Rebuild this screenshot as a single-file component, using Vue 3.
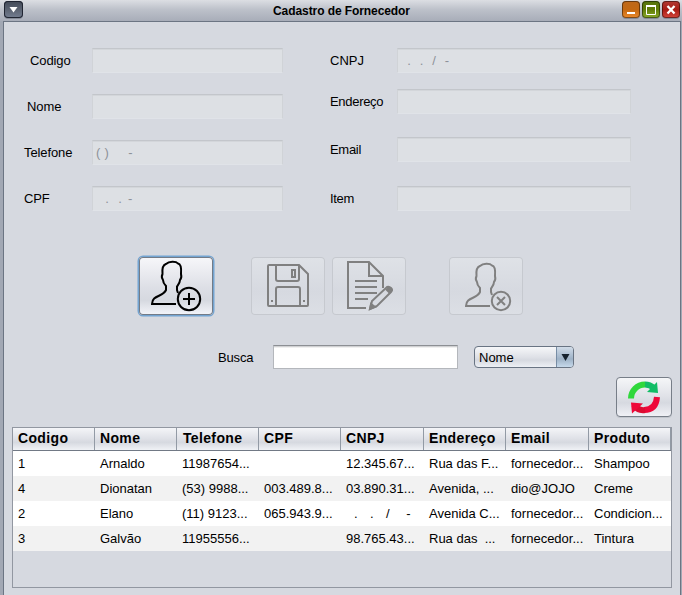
<script setup>
const left = [
  { label: 'Codigo', key: 'codigo', mask: '' },
  { label: 'Nome', key: 'nome', mask: '' },
  { label: 'Telefone', key: 'telefone', mask: '( )     -' },
  { label: 'CPF', key: 'cpf', mask: '   .   .  -' },
]
const right = [
  { label: 'CNPJ', key: 'cnpj', mask: '   .   .   /   -' },
  { label: 'Endereço', key: 'endereco', mask: '' },
  { label: 'Email', key: 'email', mask: '' },
  { label: 'Item', key: 'item', mask: '' },
]
const heads = ['Codigo', 'Nome', 'Telefone', 'CPF', 'CNPJ', 'Endereço', 'Email', 'Produto']
const rows = [
  ['1', 'Arnaldo', '11987654...', '', '12.345.67...', 'Rua das F...', 'fornecedor...', 'Shampoo'],
  ['4', 'Dionatan', '(53) 9988...', '003.489.8...', '03.890.31...', 'Avenida, ...', 'dio@JOJO', 'Creme'],
  ['2', 'Elano', '(11) 9123...', '065.943.9...', '  .   .   /    -', 'Avenida C...', 'fornecedor...', 'Condicion...'],
  ['3', 'Galvão', '11955556...', '', '98.765.43...', 'Rua das  ...', 'fornecedor...', 'Tintura'],
]
const person = 'M26 45H2C2 36 13 38 16 31V27C14 25 13 23 13 21C11.500 19 12 16 12.500 15C12 10 13 6 16 5C19 2 26 2 28 4.500C31 5 31.500 9 31 15C31.500 17 31 20 30 21C30 24 28 26 27 27.500V31L28 34'
</script>

<template>
  <main class="window">
    <header class="titlebar">
      <button class="ctl menu"><svg width="18" height="17"><path d="M5.5 6h8L9.500 11.500z" fill="#fff" /></svg></button>
      <h1>Cadastro de Fornecedor</h1>
      <div class="controls">
        <button class="ctl min"><svg width="18" height="17"><path d="M5 12h8" stroke="#fff" stroke-width="2" /></svg></button>
        <button class="ctl max"><svg width="18" height="17"><path d="M4.5 5v8.5h9V5" fill="none" stroke="#fff" /><path d="M4 5h10" stroke="#fff" stroke-width="2" /></svg></button>
        <button class="ctl close"><svg width="18" height="17"><path d="M5.5 5l7 7.500M12.500 5l-7 7.500" stroke="#fff" stroke-width="2.300" /></svg></button>
      </div>
    </header>
    <section class="panel">
      <div class="form">
        <div class="col left">
          <div v-for="f in left" :key="f.key" class="row" :class="f.key">
            <span class="label">{{ f.label }}</span><span class="field">{{ f.mask }}</span>
          </div>
        </div>
        <div class="col right">
          <div v-for="f in right" :key="f.key" class="row" :class="f.key">
            <span class="label">{{ f.label }}</span><span class="field">{{ f.mask }}</span>
          </div>
        </div>
      </div>

      <div class="actions">
        <button class="action add">
          <svg width="74" height="58" fill="none" stroke="#000" stroke-width="2">
            <g transform="translate(11 2)"><path :d="person" /><circle cx="39" cy="40" r="11.200" /><path d="M33 40h12M39 34v12" /></g>
          </svg>
        </button>
        <button class="action save off">
          <svg width="74" height="58" fill="none" stroke="#808080" stroke-width="2">
            <path d="M18 8h30l9 9v31q0 1-1 1H18q-1 0-1-1V9q0-1 1-1z" /><path d="M25 8v14q0 2 2 2h19q2 0 2-2V8M25 49V32q0-2 2-2h20q2 0 2 2v17" /><path d="M41 13h3v7h-3z" /><path d="M20 44h2M52 44h2" />
          </svg>
        </button>
        <button class="action edit off">
          <svg width="74" height="58" fill="none" stroke="#808080" stroke-width="2">
            <path d="M34 51H16V5h21l14 14v12M37 5v14h14M23 24h22M23 30h22M23 36h22M23 42h13" />
            <path d="M38 52l2-8 15-14q2-1 4 1 2 2 0 4L45 49z" /><path d="M55 31l4 4" stroke-width="5" /><path d="M38 52l1-5 4 3z" fill="#808080" />
          </svg>
        </button>
        <button class="action remove off">
          <svg width="74" height="58" fill="none" stroke="#808080" stroke-width="2">
            <g transform="translate(15 4)"><path :d="person" /><circle cx="37" cy="40" r="9.200" /><path d="M33 36l8 8m0-8l-8 8" /></g>
          </svg>
        </button>
      </div>

      <div class="search">
        <span class="search-label">Busca</span>
        <span class="search-field"></span>
        <span class="combo"><span class="value">Nome</span><span class="arrow"><svg width="16" height="20"><path d="M4.500 7h8l-4 7z" fill="#16222e" /></svg></span></span>
      </div>

      <button class="refresh">
        <svg width="54" height="38">
          <path d="M14 20A14 14 0 0 1 28 6" transform="translate(0 .5)" fill="none" stroke="#30d83c" stroke-width="6" />
          <path d="M28 6.500Q33 6.500 37 10" fill="none" stroke="#12bd66" stroke-width="6" />
          <path d="M40 4l1 11-11-1z" fill="#12bd66" />
          <path d="M40 19Q39 32 27 32" fill="none" stroke="#ee0839" stroke-width="6" />
          <path d="M28 32Q21 33 17 27" fill="none" stroke="#dc0c32" stroke-width="6" />
          <path d="M14 24.500l12 1-11 10z" fill="#ee0839" />
        </svg>
      </button>

      <div class="table">
        <div class="tr head"><div v-for="h in heads" :key="h" class="td">{{ h }}</div></div>
        <div v-for="r in rows" :key="r[0]" class="tr">
          <div v-for="(c, i) in r" :key="i" class="td" :class="{ blank: c.startsWith(' ') }">{{ c }}</div>
        </div>
      </div>
    </section>
  </main>
</template>

<style>
body { margin: 0; overflow: hidden; }
</style>
<style scoped>
* { box-sizing: border-box; }
.window { width: 682px; height: 595px; background: #a2a8b4; display: flex; flex-direction: column; font: 13px/16px "Liberation Sans", Arial, sans-serif; color: #000; }
.titlebar { height: 21px; flex: none; display: flex; align-items: flex-start; padding: 1px 2px 0 4px; background: linear-gradient(#dcdee3, #bdc1ca 45%, #a8adb9); }
h1 { flex: 1; margin: 2px 0 0 38px; font-size: 12px; line-height: 16px; text-align: center; letter-spacing: -.08px; }
button { padding: 0; margin: 0; display: flex; }
.controls { display: flex; gap: 2px; }
.ctl { width: 18px; height: 17px; border: 0; border-radius: 4px; box-shadow: inset 0 0 0 1px rgba(0, 0, 0, .45), 0 1px 0 #858b98; flex: none; }
.ctl.menu { width: 19px; background: linear-gradient(#424957, #5b6372 50%, #747e91); box-shadow: inset 0 0 0 1px #202532, 0 1px 0 #858b98; }
.min { background: linear-gradient(#bd681b, #c36812 50%, #ed8b2d); }
.max { background: linear-gradient(#56730f, #607c08 50%, #8bab2a); }
.close { background: linear-gradient(#b23a34, #a81c15 50%, #d5453b); }
.panel { flex: 1; margin: 0 1px 0 3px; border: 1px solid #6c7583; border-bottom: 0; background: #d6d9e0; display: flex; flex-direction: column; }
.form { display: flex; height: 234px; padding-top: 26px; flex: none; }
.col { display: flex; flex-direction: column; }
.left { width: 326px; gap: 21px; padding-left: 20px; }
.row { display: flex; height: 25px; align-items: center; flex: none; }
.left .label { width: 68px; letter-spacing: -.1px; }
.left .codigo .label { padding-left: 6px; }
.left .nome .label { padding-left: 3px; }
.right .label { width: 67px; letter-spacing: -.3px; }
.right .cnpj .label { letter-spacing: 0; }
.right .endereco { margin-top: 16px; }
.right .email { margin-top: 23px; }
.right .item { margin-top: 24px; }
.field { width: 191px; height: 25px; line-height: 23px; padding: 0 4px; color: #8d9299; white-space: pre; background: #dde0e4; border: 1px solid #d0d3d7; border-top-color: #c3c6cb; border-bottom-color: #e0e3e8; box-shadow: inset 0 1px 0 #d3d6da; letter-spacing: -.6px; }
.right .field { width: 234px; padding-left: 0; letter-spacing: -.5px; }
.cpf .field { padding-left: 2.500px; letter-spacing: -.35px; }
.telefone .field { padding-left: 3px; letter-spacing: .25px; }
.actions { display: flex; flex: none; height: 60px; padding-left: 134px; }
.action { width: 74px; height: 58px; border-radius: 4px; border: 0; flex: none; margin-top: 1px; }
.add { background: linear-gradient(#f7f7fa, #dcdee5 55%, #d6d9e0 75%, #f4f5fa); box-shadow: inset 0 0 0 1px #737b87, 0 0 0 1.500px #73a4d1; width: 74px; margin-left: 1px; }
.off { background: linear-gradient(#dfe2e7, #d6d9e0 60%, #dcdfe5); box-shadow: inset 0 0 0 1px #c6c9cf; }
.save { margin-left: 38px; }
.edit { margin-left: 7px; }
.remove { margin-left: 43px; }
.search { display: flex; flex: none; height: 26px; margin-top: 28px; padding-left: 214px; align-items: center; }
.search-label { width: 55px; padding-top: 2px; letter-spacing: -.15px; }
.search-field { width: 185px; height: 24px; background: #fff; border: 1px solid #b4b7bc; border-top-color: #8c8f94; box-shadow: inset 0 1px 0 #d0d1d3, inset 0 2px 0 #f0f0f0; }
.combo { width: 100px; height: 22px; margin: 0 0 0 16px; display: flex; border: 1px solid #697483; border-radius: 4px; overflow: hidden; background: linear-gradient(#f6f7f9, #dfe1e7 50%, #d6d9e0 65%, #edf0f5); }
.value { flex: 1; padding-left: 4px; line-height: 22px; }
.arrow { width: 16px; background: linear-gradient(#d1dce8, #a6b9cd 50%, #9eb2c6 60%, #c6d9eb); box-shadow: -1px 0 #778da5; }
.refresh { flex: none; width: 56px; height: 40px; margin: 7px 0 0 612px; border: 1px solid #777e88; border-radius: 4px; background: linear-gradient(#f5f6f8, #dfe1e7 50%, #d6d9e0 65%, #f0f1f6); box-shadow: 0 1px 0 #c2c6cd; }
.table { width: 660px; height: 161px; flex: none; margin: 10px 0 0 8px; border: 1px solid #9297a1; }
.tr { height: 25px; display: grid; grid-template-columns: 82px 82px 82px 82px 83px 82px 83px 82px; background: #fff; }
.tr:nth-child(odd) { background: #f2f2f2; }
.td { padding-left: 5px; line-height: 25px; white-space: pre; letter-spacing: 0; }
.td.blank { letter-spacing: .4px; }
.tr.head { height: 23px; background: linear-gradient(#f4f5f8, #dfe1e7 48%, #d6d9e0 65%, #f0f2f6); border-bottom: 1px solid #717985; font-weight: 700; font-size: 14px; }
.head .td { line-height: 21px; letter-spacing: .35px; border-right: 1px solid #929aa5; }
.head .td:nth-child(3) { padding-left: 6px; }
</style>
